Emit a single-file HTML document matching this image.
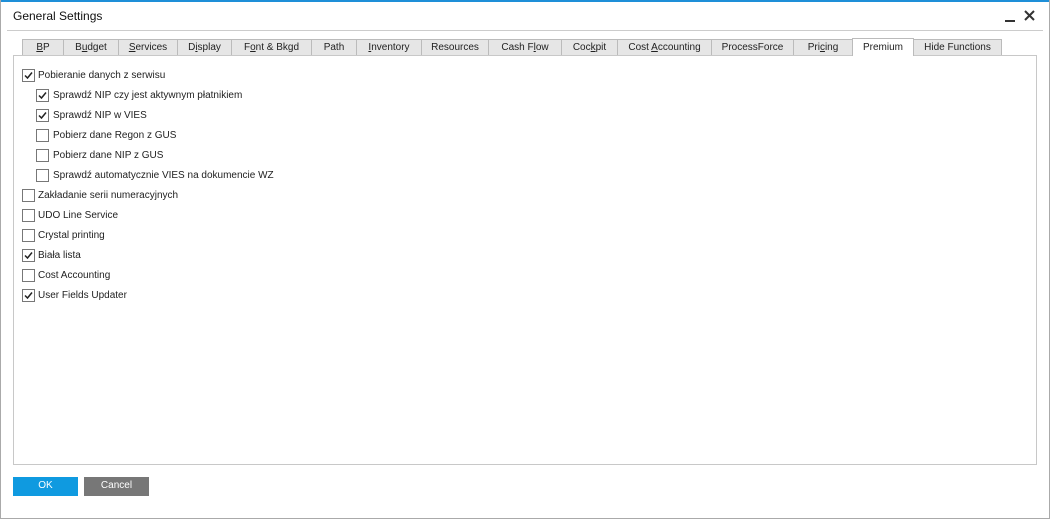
<!DOCTYPE html>
<html><head><style>
body{margin:0;width:1050px;height:520px;background:#fff;font-family:"Liberation Sans",sans-serif;font-size:10px;color:#222;position:relative;overflow:hidden}
.frame{position:absolute;left:0;top:0;width:1048px;height:518px;border:1px solid #aaa;border-top:none}
.topbar{position:absolute;left:0;top:0;width:1050px;height:2px;background:#1e8fd8}
.title{position:absolute;left:13px;top:9px;font-size:12px;color:#111}
.sep{position:absolute;left:7px;top:30px;width:1036px;height:1px;background:#ccc}
.tab{position:absolute;top:39px;height:16px;background:#e6e6e6;border:1px solid #bbb;border-bottom:none;box-sizing:border-box;text-align:center;line-height:16px;font-size:10px;color:#222}
.tab.act{background:#fff;top:38px;height:18px;line-height:18px;z-index:2}
.panel{position:absolute;left:13px;top:55px;width:1024px;height:410px;border:1px solid #c8c8c8;box-sizing:border-box}
.cb{position:absolute;width:11px;height:11px;border:1px solid #777;background:#fff}
.cb svg{position:absolute;left:0;top:0}
.lbl{position:absolute;font-size:10px;color:#222;margin-top:1px}
.btn{position:absolute;top:477px;width:65px;height:19px;color:#fff;text-align:center;line-height:18px;font-size:10px}
</style></head><body>
<div class="topbar"></div>
<div class="frame"></div>
<div class="title">General Settings</div>
<div style="position:absolute;left:1005px;top:20px;width:10px;height:2px;background:#333"></div>
<svg style="position:absolute;left:1024px;top:10px" width="11" height="11"><path d="M1 1L10 10M10 1L1 10" stroke="#333" stroke-width="2"/></svg>
<div class="sep"></div>
<div class="tab" style="left:22px;width:42px"><u>B</u>P</div>
<div class="tab" style="left:63px;width:56px">B<u>u</u>dget</div>
<div class="tab" style="left:118px;width:60px"><u>S</u>ervices</div>
<div class="tab" style="left:177px;width:55px">D<u>i</u>splay</div>
<div class="tab" style="left:231px;width:81px">F<u>o</u>nt &amp; Bkgd</div>
<div class="tab" style="left:311px;width:46px">Path</div>
<div class="tab" style="left:356px;width:66px"><u>I</u>nventory</div>
<div class="tab" style="left:421px;width:68px">Resources</div>
<div class="tab" style="left:488px;width:74px">Cash F<u>l</u>ow</div>
<div class="tab" style="left:561px;width:57px">Coc<u>k</u>pit</div>
<div class="tab" style="left:617px;width:95px">Cost <u>A</u>ccounting</div>
<div class="tab" style="left:711px;width:83px">ProcessForce</div>
<div class="tab" style="left:793px;width:60px">Pri<u>c</u>ing</div>
<div class="tab act" style="left:852px;width:62px">Premium</div>
<div class="tab" style="left:913px;width:89px">Hide Functions</div>
<div class="panel"></div>
<div class="cb" style="left:22px;top:69px"><svg width="11" height="11"><path d="M2 5.5 L4.5 8 L9 2.5" stroke="#222" stroke-width="1.5" fill="none"/></svg></div><div class="lbl" style="left:38px;top:69px">Pobieranie danych z serwisu</div>
<div class="cb" style="left:36px;top:89px"><svg width="11" height="11"><path d="M2 5.5 L4.5 8 L9 2.5" stroke="#222" stroke-width="1.5" fill="none"/></svg></div><div class="lbl" style="left:53px;top:89px">Sprawdź NIP czy jest aktywnym płatnikiem</div>
<div class="cb" style="left:36px;top:109px"><svg width="11" height="11"><path d="M2 5.5 L4.5 8 L9 2.5" stroke="#222" stroke-width="1.5" fill="none"/></svg></div><div class="lbl" style="left:53px;top:109px">Sprawdź NIP w VIES</div>
<div class="cb" style="left:36px;top:129px"></div><div class="lbl" style="left:53px;top:129px">Pobierz dane Regon z GUS</div>
<div class="cb" style="left:36px;top:149px"></div><div class="lbl" style="left:53px;top:149px">Pobierz dane NIP z GUS</div>
<div class="cb" style="left:36px;top:169px"></div><div class="lbl" style="left:53px;top:169px">Sprawdź automatycznie VIES na dokumencie WZ</div>
<div class="cb" style="left:22px;top:189px"></div><div class="lbl" style="left:38px;top:189px">Zakładanie serii numeracyjnych</div>
<div class="cb" style="left:22px;top:209px"></div><div class="lbl" style="left:38px;top:209px">UDO Line Service</div>
<div class="cb" style="left:22px;top:229px"></div><div class="lbl" style="left:38px;top:229px">Crystal printing</div>
<div class="cb" style="left:22px;top:249px"><svg width="11" height="11"><path d="M2 5.5 L4.5 8 L9 2.5" stroke="#222" stroke-width="1.5" fill="none"/></svg></div><div class="lbl" style="left:38px;top:249px">Biała lista</div>
<div class="cb" style="left:22px;top:269px"></div><div class="lbl" style="left:38px;top:269px">Cost Accounting</div>
<div class="cb" style="left:22px;top:289px"><svg width="11" height="11"><path d="M2 5.5 L4.5 8 L9 2.5" stroke="#222" stroke-width="1.5" fill="none"/></svg></div><div class="lbl" style="left:38px;top:289px">User Fields Updater</div>
<div class="btn" style="left:13px;background:#0f9ae0">OK</div>
<div class="btn" style="left:84px;background:#777">Cancel</div>
</body></html>
